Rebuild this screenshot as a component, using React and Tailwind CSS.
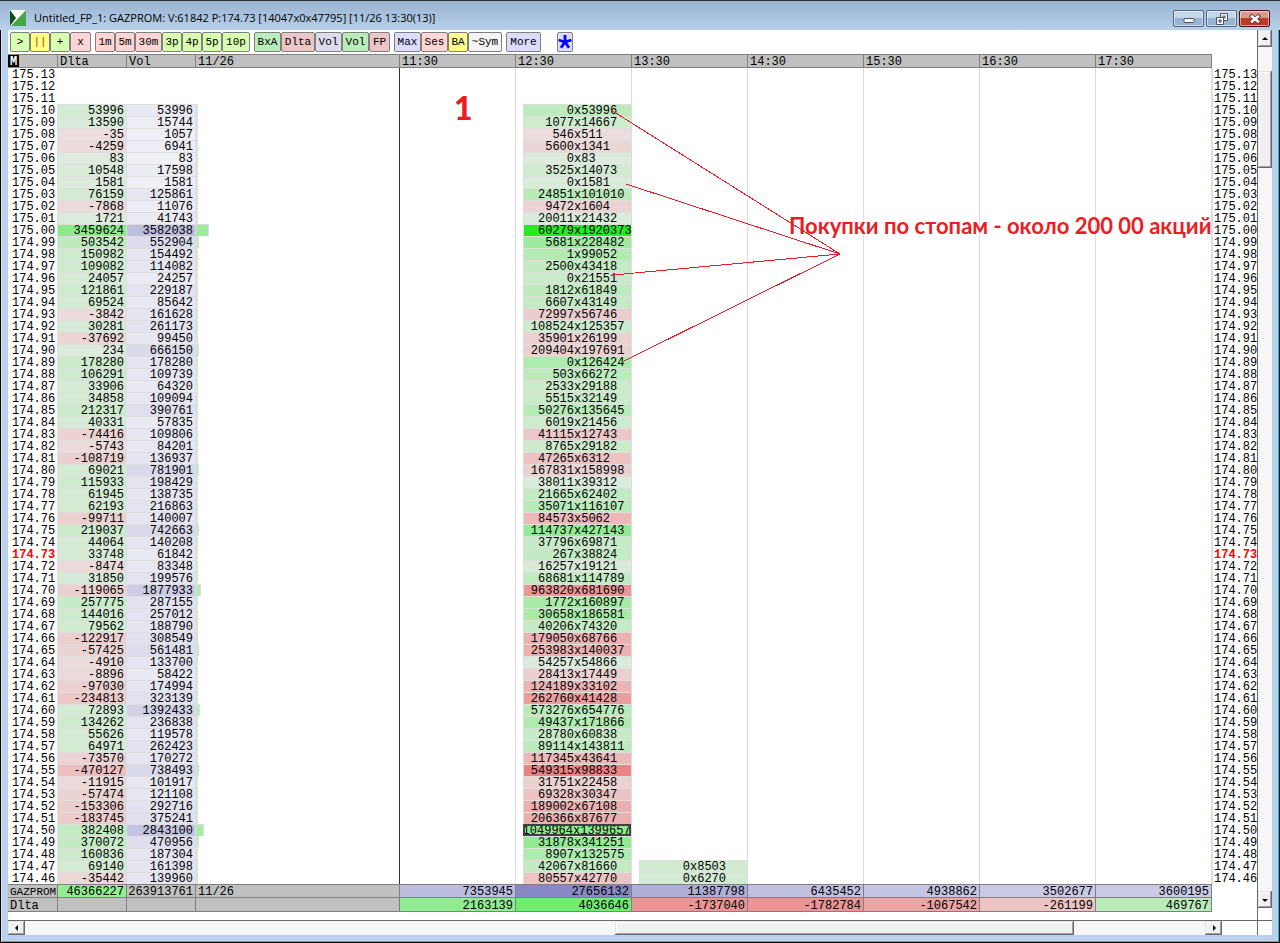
import React from 'react';

const ROWS = `175.13
175.12
175.11
175.10 53996 53996 0x53996
175.09 13590 15744 1077x14667
175.08 -35 1057 546x511
175.07 -4259 6941 5600x1341
175.06 83 83 0x83
175.05 10548 17598 3525x14073
175.04 1581 1581 0x1581
175.03 76159 125861 24851x101010
175.02 -7868 11076 9472x1604
175.01 1721 41743 20011x21432
175.00 3459624 3582038 60279x1920373
174.99 503542 552904 5681x228482
174.98 150982 154492 1x99052
174.97 109082 114082 2500x43418
174.96 24057 24257 0x21551
174.95 121861 229187 1812x61849
174.94 69524 85642 6607x43149
174.93 -3842 161628 72997x56746
174.92 30281 261173 108524x125357
174.91 -37692 99450 35901x26199
174.90 234 666150 209404x197691
174.89 178280 178280 0x126424
174.88 106291 109739 503x66272
174.87 33906 64320 2533x29188
174.86 34858 109094 5515x32149
174.85 212317 390761 50276x135645
174.84 40331 57835 6019x21456
174.83 -74416 109806 41115x12743
174.82 -5743 84201 8765x29182
174.81 -108719 136937 47265x6312
174.80 69021 781901 167831x158998
174.79 115933 198429 38011x39312
174.78 61945 138735 21665x62402
174.77 62193 216863 35071x116107
174.76 -99711 140007 84573x5062
174.75 219037 742663 114737x427143
174.74 44064 140208 37796x69871
174.73 33748 61842 267x38824
174.72 -8474 83348 16257x19121
174.71 31850 199576 68681x114789
174.70 -119065 1877933 963820x681690
174.69 257775 287155 1772x160897
174.68 144016 257012 30658x186581
174.67 79562 188790 40206x74320
174.66 -122917 308549 179050x68766
174.65 -57425 561481 253983x140037
174.64 -4910 133700 54257x54866
174.63 -8896 58422 28413x17449
174.62 -97030 174994 124189x33102
174.61 -234813 323139 262760x41428
174.60 72893 1392433 573276x654776
174.59 134262 236838 49437x171866
174.58 55626 119578 28780x60838
174.57 64971 262423 89114x143811
174.56 -73570 170272 117345x43641
174.55 -470127 738493 549315x98833
174.54 -11915 101917 31751x22458
174.53 -57474 121108 69328x30347
174.52 -153306 292716 189002x67108
174.51 -183745 375241 206366x87677
174.50 382408 2843100 1049964x1399657
174.49 370072 470956 31878x341251
174.48 160836 187304 8907x132575
174.47 69140 161398 42067x81660 0x8503
174.46 -35442 139960 80557x42770 0x6270`
  .split('\n')
  .map((line) => {
    const [price, delta, volume, now, next] = line.split(' ');
    return { price, delta, volume, now, next };
  });

const TIMES = ['11:30', '12:30', '13:30', '14:30', '15:30', '16:30', '17:30'];
const LAST_PRICE = '174.73';
const SELECTED_PRICE = '174.50';

const TOTALS = [
  { volume: '7353945', delta: '2163139', vc: 'bg-[#bcbce0]', dc: 'bg-[#90ec90]' },
  { volume: '27656132', delta: '4036646', vc: 'bg-[#8888c4]', dc: 'bg-[#6eed6e]' },
  { volume: '11387798', delta: '-1737040', vc: 'bg-[#aeaed8]', dc: 'bg-[#ec9494]' },
  { volume: '6435452', delta: '-1782784', vc: 'bg-[#c0c0e1]', dc: 'bg-[#ec9494]' },
  { volume: '4938862', delta: '-1067542', vc: 'bg-[#c5c5e4]', dc: 'bg-[#eca4a4]' },
  { volume: '3502677', delta: '-261199', vc: 'bg-[#cacae6]', dc: 'bg-[#ecc4c4]' },
  { volume: '3600195', delta: '469767', vc: 'bg-[#cacae6]', dc: 'bg-[#b9ecb9]' },
];

// Heat colours fade from near-grey to full colour with the square root of the value.
function deltaColor(value, strength) {
  const fade = Math.round(222 - strength * Math.sqrt(Math.abs(value)));
  return value < 0 ? `rgb(236,${fade},${fade})` : `rgb(${fade},235,${fade})`;
}

function volumeColor(value) {
  const root = Math.sqrt(value);
  const rg = Math.round(240 - 0.0264 * root);
  return `rgb(${rg},${rg},${Math.round(247 - 0.0125 * root)})`;
}

function barWidth(volume) {
  if (volume > 3000000) return 13;
  if (volume > 2000000) return 8;
  if (volume > 1500000) return 5;
  if (volume > 1000000) return 4;
  return volume > 450000 ? 3 : 2;
}

function bidAskDelta(text) {
  const [bid, ask] = text.split('x').map(Number);
  return ask - bid;
}

function BidAsk({ text, selected }) {
  const [bid, ask] = text.split('x');
  return (
    <div
      className={`ml-[7px] flex h-3 whitespace-nowrap ${
        selected
          ? 'pt-[2px] outline-2 -outline-offset-2 outline-[#404040]'
          : 'border-t border-l border-[#dedede] pt-px'
      }`}
      style={{ backgroundColor: deltaColor(bidAskDelta(text), 0.136) }}
    >
      <span className="flex w-[50px] shrink-0 justify-end">{bid}</span>
      <span>x{ask}</span>
    </div>
  );
}

const GREEN = 'bg-[#d8ffb0]';
const PINK = 'bg-[#ffd4d4]';
const YELLOW = 'bg-[#ffff88]';
const LILAC = 'bg-[#dcdcff]';

const TOOL_GROUPS = [
  [['>', GREEN, 'w-5'], ['||', `${YELLOW} text-[#a05000]`, 'w-5'], ['+', GREEN, 'w-5'], ['x', PINK, 'w-[21px]']],
  [
    ['1m', PINK, 'w-5'], ['5m', PINK, 'w-5'], ['30m', PINK, 'w-[27px]'], ['3p', GREEN, 'w-5'],
    ['4p', GREEN, 'w-5'], ['5p', GREEN, 'w-5'], ['10p', GREEN, 'w-7'],
  ],
  [
    ['BxA', 'bg-[#b8ecb8]', 'w-[27px]'], ['Dlta', 'bg-[#ecc6c6]', 'w-[34px]'], ['Vol', 'bg-[#dcdcec]', 'w-[27px]'],
    ['Vol', 'bg-[#b8ecb8]', 'w-[27px]'], ['FP', 'bg-[#ecc6c6]', 'w-[21px]'],
  ],
  [['Max', LILAC, 'w-[27px]'], ['Ses', PINK, 'w-[27px]'], ['BA', YELLOW, 'w-5'], ['~Sym', 'bg-[#f4f4f4]', 'w-[34px]']],
  [['More', LILAC, 'w-[35px]']],
];

function Toolbar() {
  return (
    <div className="flex h-6 items-start gap-1 pt-[2px] pl-[2px]">
      {TOOL_GROUPS.map((group, g) => (
        <div key={g} className="flex">
          {group.map(([label, color, width], i) => (
            <button
              key={i}
              type="button"
              className={`flex h-5 items-center justify-center rounded-xs border border-[#808080] text-[11px] leading-3 ${color} ${width}`}
            >
              {label}
            </button>
          ))}
        </div>
      ))}
      <button
        type="button"
        aria-label="Settings"
        className="ml-3 flex h-5 w-4 items-center justify-center rounded-xs border border-[#808080] bg-[#dcdcff]"
      >
        <svg className="h-[14px] w-[14px] shrink-0" viewBox="0 0 14 14" stroke="#0000ff" strokeWidth="2.8">
          <path d="M7 7V0M7 7L.6 5M7 7L13.400 5M7 7L3 12.800M7 7L11 12.800" />
        </svg>
      </button>
    </div>
  );
}

function TitleBar() {
  const frame = 'flex h-[17px] w-[31px] items-center justify-center rounded-xs border shadow-[inset_0_0_0_1px_rgba(255,255,255,0.5)]';
  const blue = 'border-[#53667f] bg-linear-to-b from-[#c3d6ea] from-50% to-[#98b4d2] to-50%';
  return (
    <header className="flex h-[30px] items-start border-t border-[#333] bg-linear-to-b from-[#99b4d1] to-[#b9d1ea] pr-[10px] pl-[10px]">
      <svg className="mt-[9px] h-4 w-4 shrink-0" viewBox="0 0 16 16">
        <rect width="16" height="16" fill="#fff" />
        <path d="M0 0L6 8L0 16Z" fill="#0d4d22" />
        <path d="M16 0V16H1Z" fill="#45a845" />
      </svg>
      <h1 className="mt-[9px] ml-2 grow font-['Open_Sans',sans-serif] text-[11px] leading-4 whitespace-nowrap text-black">
        Untitled_FP_1: GAZPROM: V:61842 P:174.73 [14047x0x47795] [11/26 13:30(13)]
      </h1>
      <div className="mt-[9px] flex gap-[2px]">
        <button type="button" aria-label="Minimize" className={`${frame} ${blue}`}>
          <svg className="h-3 w-3" viewBox="0 0 12 12">
            <rect x="1" y="5.500" width="10" height="4" rx="1" fill="#fff" stroke="#4a5566" />
          </svg>
        </button>
        <button type="button" aria-label="Restore" className={`${frame} ${blue}`}>
          <svg className="h-3 w-3" viewBox="0 0 12 12" fill="#fff" stroke="#4a5566">
            <path d="M4.500 .5H11.500V7.500H4.500Z" />
            <rect x="7" y="3" width="2" height="2" />
            <path d="M.5 4.500H7.500V11.500H.5Z" />
            <rect x="3" y="7" width="2" height="2" fill="#98b4d2" />
          </svg>
        </button>
        <button
          type="button"
          aria-label="Close"
          className={`${frame} border-[#4c1018] bg-linear-to-b from-[#dc9a8c] from-50% to-[#bc3a26] to-50%`}
        >
          <svg className="h-3 w-3" viewBox="0 0 12 12" fill="none">
            <path d="M1.200 2L10.800 10M10.800 2L1.200 10" stroke="#5b3a44" strokeWidth="4.200" />
            <path d="M2 2.700L10 9.300M10 2.700L2 9.300" stroke="#fff" strokeWidth="2.400" />
          </svg>
        </button>
      </div>
    </header>
  );
}

const RAISED =
  'shrink-0 bg-[#f0f0f0] shadow-[inset_-1px_-1px_0_#696969,inset_1px_1px_0_#e3e3e3,inset_-2px_-2px_0_#a0a0a0,inset_2px_2px_0_#fff]';
const TRACK = 'bg-[repeating-conic-gradient(#f0f0f0_0_25%,#ffffff_0_50%)] bg-size-[2px_2px]';

function ScrollButton({ label, points, size }) {
  return (
    <button type="button" aria-label={label} className={`flex items-center justify-center ${RAISED} ${size}`}>
      <svg className="h-2 w-2" viewBox="0 0 8 8">
        <polygon points={points} fill="#000" />
      </svg>
    </button>
  );
}

function HeatTable() {
  const head = 'border-y border-l border-[#808080] bg-[#c0c0c0] p-0 pt-[2px] pl-[2px] text-left font-normal';
  const value = 'border-t border-l border-[#dedede] p-0 pt-px pr-[2px] text-right';
  const foot = 'border-t border-l border-[#808080] p-0 pt-[2px]';
  return (
    <table className="w-full table-fixed border-separate border-spacing-0 text-[12px] leading-[10px] text-black">
      <colgroup>
        <col className="w-[49px]" />
        <col className="w-[69px]" />
        <col className="w-[69px]" />
        <col className="w-[204px]" />
        {TIMES.map((t) => (
          <col key={t} />
        ))}
        <col className="w-[46px]" />
      </colgroup>
      <thead>
        <tr className="h-[14px]">
          <th className="border-y border-[#808080] bg-[#c0c0c0] p-0 text-left">
            <span className="block w-[11px] bg-black pt-[2px] pl-[2px] text-white">M</span>
          </th>
          <th className={head}>Dlta</th>
          <th className={head}>Vol</th>
          <th className={head}>11/26</th>
          {TIMES.map((t) => (
            <th key={t} className={head}>{t}</th>
          ))}
          <td className="border-l border-[#808080] p-0" />
        </tr>
      </thead>
      <tbody>
        {ROWS.map(({ price, delta, volume, now, next }) => {
          const priceStyle = price === LAST_PRICE ? 'font-bold text-[#ff0000]' : 'font-normal';
          const filled = volume !== undefined;
          return (
            <tr key={price} className="h-3">
              <th className={`p-0 pt-[2px] pl-1 text-left ${priceStyle}`}>{price}</th>
              {filled ? (
                <>
                  <td className={value} style={{ backgroundColor: deltaColor(Number(delta), 0.0446) }}>{delta}</td>
                  <td className={value} style={{ backgroundColor: volumeColor(Number(volume)) }}>{volume}</td>
                  <td className="border-l border-[#dedede] p-0">
                    <div
                      className="h-3 border-t border-r border-[#dedede]"
                      style={{ width: barWidth(Number(volume)), backgroundColor: deltaColor(Number(volume), 0.033) }}
                    />
                  </td>
                </>
              ) : (
                <>
                  <td className="p-0" />
                  <td className="p-0" />
                  <td className="p-0" />
                </>
              )}
              {TIMES.map((t) => {
                const text = t === '12:30' ? now : t === '13:30' ? next : undefined;
                return (
                  <td key={t} className={`border-l p-0 ${t === '11:30' ? 'border-[#303030]' : 'border-[#dedede]'}`}>
                    {text && <BidAsk text={text} selected={price === SELECTED_PRICE} />}
                  </td>
                );
              })}
              <td className={`border-l-2 border-[#dedede] p-0 pt-[2px] pl-px ${priceStyle}`}>{price}</td>
            </tr>
          );
        })}
      </tbody>
      <tfoot className="whitespace-nowrap">
        <tr className="h-[13px]">
          <th className="border-t border-[#808080] bg-[#c0c0c0] p-0 pt-[2px] pl-[2px] text-left text-[11px] font-normal">GAZPROM</th>
          <td className={`${foot} bg-[#90ee90] pr-[2px] text-right`}>46366227</td>
          <td className={`${foot} bg-[#c0c0c0] pr-[2px] text-right`}>263913761</td>
          <td className={`${foot} bg-[#c0c0c0] pl-[2px]`}>11/26</td>
          {TOTALS.map((t) => (
            <td key={t.volume} className={`${foot} ${t.vc} pr-[2px] text-right`}>{t.volume}</td>
          ))}
          <td className="border-l border-[#808080] p-0" />
        </tr>
        <tr className="h-[15px]">
          <th className="border-y border-[#808080] bg-[#c0c0c0] p-0 pt-[2px] pl-[2px] text-left font-normal">Dlta</th>
          <td className={`${foot} border-b bg-[#c0c0c0]`} />
          <td className={`${foot} border-b bg-[#c0c0c0]`} />
          <td className={`${foot} border-b bg-[#c0c0c0]`} />
          {TOTALS.map((t) => (
            <td key={t.delta} className={`${foot} border-b ${t.dc} pr-[2px] text-right`}>{t.delta}</td>
          ))}
          <td className="border-l border-[#808080] p-0" />
        </tr>
      </tfoot>
    </table>
  );
}

function Annotations() {
  return (
    <div className="pointer-events-none absolute inset-0 font-[Lato,'Open_Sans',sans-serif] font-bold text-[#ed1c24]">
      <svg className="absolute top-0 left-0 h-full w-full" stroke="#ed1c24" shapeRendering="crispEdges">
        <path d="M603 56L832 200M618 130L832 200M605 221L832 200M614 308L832 200" fill="none" />
      </svg>
      <span className="absolute top-[38px] left-[446px] text-[32px] leading-8 font-black">1</span>
      <span className="absolute top-[158px] left-[781px] text-[22px] leading-7 whitespace-nowrap">
        Покупки по стопам - около 200 00 акций
      </span>
    </div>
  );
}

export default function App() {
  return (
    <div className="bg-black font-['Liberation_Mono',monospace]">
      <TitleBar />
      <div className="border-x border-black">
        <div className="border-r border-b border-l border-[#20c0d8] border-l-[#dce8f4] bg-[#b9d1ea] pr-[6px] pb-[6px] pl-[6px]">
          <main className="bg-white">
            <div className="flex">
              <div className="min-w-0 grow pb-2">
                <Toolbar />
                <div className="relative">
                  <HeatTable />
                  <Annotations />
                </div>
              </div>
              <div className="flex w-[15px] shrink-0 flex-col border-l border-[#696969]">
                <div role="scrollbar" aria-label="Price scroll" aria-orientation="vertical" aria-controls="root" aria-valuenow={3} className={`flex grow flex-col ${TRACK}`}>
                  <ScrollButton label="Scroll up" points="4,2 7,5 1,5" size="h-[17px] w-full" />
                  <div className={`mt-6 h-[97px] ${RAISED}`} />
                  <div className="grow" />
                  <ScrollButton label="Scroll down" points="1,3 7,3 4,6" size="h-[17px] w-full" />
                </div>
                <div className="h-3 bg-white" />
              </div>
            </div>
            <div className="flex h-[15px] border-t border-[#696969]">
              <div role="scrollbar" aria-label="Time scroll" aria-orientation="horizontal" aria-controls="root" aria-valuenow={60} className={`flex min-w-0 grow ${TRACK}`}>
                <ScrollButton label="Scroll left" points="5,1 5,7 2,4" size="h-full w-[17px]" />
                <div className="grow" />
                <div className={`w-[459px] ${RAISED}`} />
                <div className="w-[131px]" />
                <ScrollButton label="Scroll right" points="3,1 3,7 6,4" size="h-full w-[17px]" />
              </div>
              <div className="w-[35px] shrink-0 bg-white" />
              <div className="w-[15px] shrink-0 border-l border-[#696969] bg-white" />
            </div>
          </main>
        </div>
      </div>
      <div className="h-px bg-black" />
    </div>
  );
}
